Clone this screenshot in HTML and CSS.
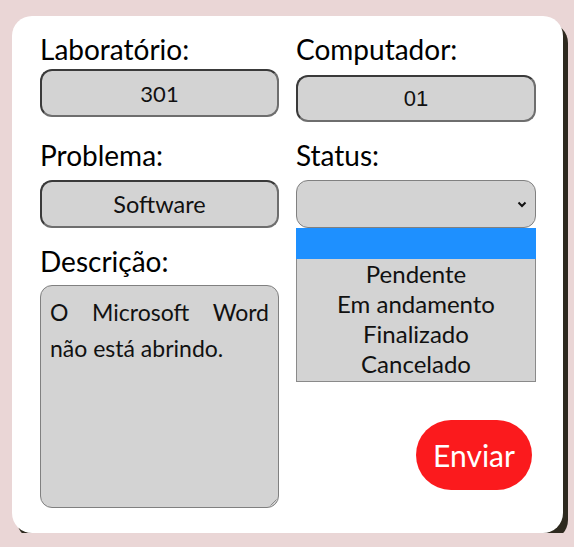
FILE: index.html
```html
<!DOCTYPE html>
<html lang="pt-BR">
<head>
<meta charset="utf-8">
<title>Chamado</title>
<link rel="stylesheet" href="styles.css">
</head>
<body>
<form class="card">
  <div class="field">
    <label class="label label-tight">Laboratório:</label>
    <input class="box box-strong" type="text" value="301">
  </div>
  <div class="field">
    <label class="label label-tight">Computador:</label>
    <input class="box box-strong box-arial shift" type="text" value="01">
  </div>
  <div class="field">
    <label class="label">Problema:</label>
    <input class="box box-strong box-wide" type="text" value="Software">
  </div>
  <div class="field">
    <label class="label">Status:</label>
    <div class="select-wrap">
      <div class="select">
        <svg class="chev" width="10" height="7" viewBox="0 0 10 7"><path d="M1.5 1.5 L5 5 L8.5 1.5" fill="none" stroke="#111" stroke-width="2"/></svg>
      </div>
      <ul class="menu">
        <li class="opt active">&nbsp;</li>
        <li class="opt">Pendente</li>
        <li class="opt">Em andamento</li>
        <li class="opt">Finalizado</li>
        <li class="opt">Cancelado</li>
      </ul>
    </div>
  </div>
  <div class="field">
    <label class="label label-desc">Descrição:</label>
    <div class="area">O Microsoft Word não está abrindo.<svg class="grip" width="7" height="7" viewBox="0 0 7 7"><path d="M6.5 0.5 L0.5 6.5 M6.5 3.5 L3.5 6.5" stroke="#8a8a8a" stroke-width="1" fill="none"/></svg></div>
  </div>
  <div class="actions">
    <button class="send" type="button">Enviar</button>
  </div>
</form>
</body>
</html>
```
FILE: styles.css
```css
html, body {
  margin: 0;
  padding: 0;
  background: #ead6d6;
}
body {
  padding: 16px 0 0 12px;
  font-family: "Lato", "DejaVu Sans", sans-serif;
}
.card {
  box-sizing: border-box;
  width: 551px;
  height: 517px;
  background: #ffffff;
  border-radius: 20px;
  box-shadow: 5px 7px 0 #2e2a1f;
  padding: 17px 27px 0 28px;
  display: grid;
  grid-template-columns: 239px 240px;
  column-gap: 17px;
  grid-template-rows: 106px 106px auto;
  align-content: start;
}
.field {
  display: flex;
  flex-direction: column;
  align-items: stretch;
}
.label {
  font-size: 28px;
  line-height: 32px;
  color: #000;
  margin-bottom: 9px;
}
.label-tight { margin-bottom: 4px; }
.label-desc { margin-bottom: 8px; }
.box {
  box-sizing: border-box;
  height: 48px;
  margin: 0;
  background: #d3d3d3;
  border-radius: 12px;
  text-align: center;
  font-family: "Lato", "DejaVu Sans", sans-serif;
  font-size: 22px;
  color: #111;
  padding: 0;
}
.box-wide { font-size: 23.5px; }
.box-strong {
  border: 2px solid #3a3a3a;
  border-bottom-color: #6e6e6e;
  border-right-color: #6e6e6e;
}
.box-arial {
  font-family: "Liberation Sans", Arial, sans-serif;
  font-size: 22px;
  height: 47px;
}
.shift { margin-top: 6px; }
.select-wrap { position: relative; }
.select {
  box-sizing: border-box;
  height: 48px;
  background: #d3d3d3;
  border: 1px solid #808080;
  border-radius: 12px;
  display: flex;
  align-items: center;
  justify-content: flex-end;
  padding-right: 8px;
}
.menu {
  position: absolute;
  left: 0;
  top: 100%;
  width: 240px;
  box-sizing: border-box;
  margin: 0;
  padding: 0 0 2px;
  list-style: none;
  background: #d3d3d3;
  border: 1px solid #8a8a8a;
  border-top: none;
  z-index: 2;
}
.opt {
  height: 30px;
  line-height: 30px;
  text-align: center;
  font-size: 24px;
  color: #111;
}
.opt.active {
  background: #1e90ff;
  height: 31px;
  margin: 0 -1px;
}
.area {
  position: relative;
  box-sizing: border-box;
  height: 223px;
  background: #d3d3d3;
  border: 1px solid #808080;
  border-radius: 12px;
  padding: 8px 9px;
  font-size: 23px;
  line-height: 36px;
  text-align: justify;
  color: #111;
}
.grip {
  position: absolute;
  right: 1px;
  bottom: 1px;
}
.actions {
  display: flex;
  justify-content: flex-end;
  align-items: flex-start;
  padding-top: 175px;
  padding-right: 4px;
}
.send {
  width: 116px;
  height: 70px;
  border: none;
  border-radius: 35px;
  background: #fb1a1d;
  color: #fff;
  font-family: "Lato", "DejaVu Sans", sans-serif;
  font-size: 30px;
  padding: 0;
}
```
